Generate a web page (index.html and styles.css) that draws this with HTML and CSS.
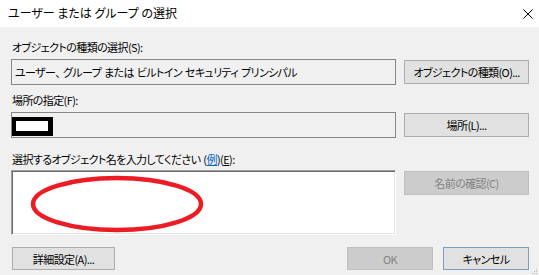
FILE: index.html
```html
<!DOCTYPE html>
<html lang="ja">
<head>
  <meta charset="UTF-8" />
  <title>ユーザー または グループ の選択</title>
  <link rel="stylesheet" href="styles.css">
</head>
<body>

<!-- タイトルバー -->
<div class="titlebar">
  <span class="title">ユーザー または グループ の選択</span>
  <svg class="close" width="10" height="10" viewBox="0 0 10 10">
    <path d="M0.5 0.5 L9.5 9.5 M9.5 0.5 L0.5 9.5" stroke="#000" stroke-width="1" fill="none"/>
  </svg>
</div>

<div class="content">
  <div class="label first">オブジェクトの種類の選択(S):</div>
  <div class="row">
    <div class="field">ユーザー、 グループ または ビルトイン セキュリティ プリンシパル</div>
    <button class="btn">オブジェクトの種類(O)...</button>
  </div>

  <div class="label">場所の指定(F):</div>
  <div class="row">
    <div class="field"><span class="redact"></span></div>
    <button class="btn">場所(L)...</button>
  </div>

  <div class="label wide">選択するオブジェクト名を入力してください (<span class="link">例</span>)(<u>E</u>):</div>
  <div class="row top">
    <div class="names">
      <svg class="circle" width="176" height="58" viewBox="0 0 176 58">
        <ellipse cx="88" cy="29" rx="84" ry="26" stroke="#ed1c24" stroke-width="4.5" fill="none"/>
      </svg>
    </div>
    <button class="btn disabled">名前の確認(C)</button>
  </div>

  <div class="footer">
    <button class="btn advanced">詳細設定(A)...</button>
    <div class="actions">
      <button class="btn disabled small">OK</button>
      <button class="btn default small">キャンセル</button>
    </div>
  </div>
</div>

<svg class="grip" width="6" height="6" viewBox="0 0 6 6">
  <rect x="4" y="0" width="1" height="1" fill="#b8b8b8"/>
  <rect x="2" y="2" width="1" height="1" fill="#b8b8b8"/>
  <rect x="4" y="2" width="1" height="1" fill="#b8b8b8"/>
  <rect x="0" y="4" width="1" height="1" fill="#b8b8b8"/>
  <rect x="2" y="4" width="1" height="1" fill="#b8b8b8"/>
  <rect x="4" y="4" width="1" height="1" fill="#b8b8b8"/>
</svg>

</body>
</html>
```

FILE: styles.css
```css
body { margin: 0; width: 539px; height: 275px; overflow: hidden; position: relative; background: #f0f0f0; color: #000; font-family: "Noto Sans CJK JP", sans-serif; font-size: 11px; letter-spacing: -0.6px; word-spacing: 1px; font-feature-settings: "palt"; }
.titlebar { height: 27px; box-sizing: border-box; background: #fff; display: flex; align-items: center; justify-content: space-between; padding: 0 6px 2px 8px; }
.title { font-size: 12px; letter-spacing: 0; word-spacing: 0; }
.close { margin-top: 2px; }
.content { padding: 12px 10px 0 11px; }
.label { height: 16px; line-height: 16px; margin: 7px 0 4px 1px; white-space: nowrap; }
.label.first { margin-top: 0; }
.label.wide { margin-top: 13px; margin-bottom: 3px; }
.link { color: #0066cc; text-decoration: underline; }
.row { display: grid; grid-template-columns: 385px 125px; column-gap: 8px; align-items: center; }
.row.top { align-items: start; }
.field { height: 26px; box-sizing: border-box; border: 1px solid #868686; padding-left: 3px; line-height: 24px; white-space: nowrap; overflow: hidden; display: flex; align-items: center; }
.redact { width: 32px; height: 10px; border: 5px solid #000; border-top-width: 4px; background: #fff; margin-left: -4px; margin-top: 2px; }
.names { height: 65px; box-sizing: border-box; background: #fff; border: 1px solid; border-color: #a0a0a0 #fff #fff #a0a0a0; box-shadow: inset 1px 1px 0 #696969, inset -1px -1px 0 #e3e3e3; position: relative; }
.circle { position: absolute; left: 17px; top: 4px; }
.btn { height: 24px; box-sizing: border-box; border: 1px solid #adadad; background: #e1e1e1; color: #000; font: inherit; letter-spacing: inherit; word-spacing: inherit; padding: 0; white-space: nowrap; }
.row.top .btn { margin-top: 1px; }
.btn.disabled { background: #cccccc; border-color: #bfbfbf; color: #838383; }
.btn.default { border-color: #7a9dc0; }
.footer { display: flex; justify-content: space-between; margin-top: 12px; }
.advanced { width: 103px; height: 23px; margin-left: 1px; }
.actions { display: flex; gap: 10px; }
.small { width: 86px; height: 23px; }
.grip { position: absolute; right: 1px; bottom: 0; }
```
